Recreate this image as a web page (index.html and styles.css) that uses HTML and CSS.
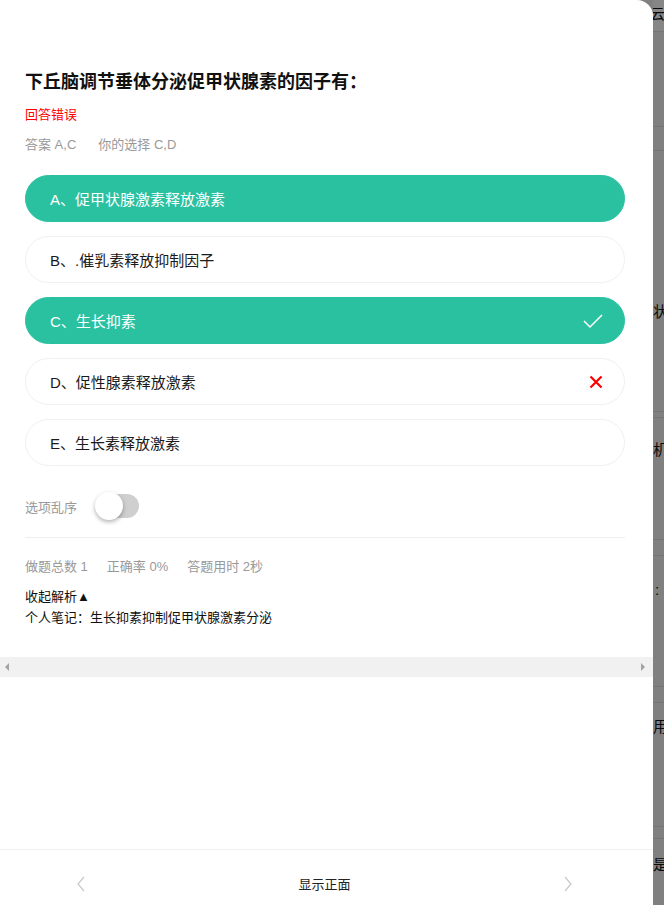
FILE: index.html
```html
<!DOCTYPE html>
<html lang="zh-CN">
<head>
  <meta charset="UTF-8">
  <meta name="viewport" content="width=device-width, initial-scale=1.0">
  <title>题目详情</title>
  <link rel="stylesheet" href="styles.css">
</head>
<body>
  <div class="screen">
    <div class="sheet">
      <div class="sheet-body">
        <h1 class="title">下丘脑调节垂体分泌促甲状腺素的因子有：</h1>
        <div class="verdict">回答错误</div>
        <div class="answer">
          <span>答案 A,C</span>
          <span>你的选择 C,D</span>
        </div>

        <div class="options">
          <div class="option selected">
            <span>A、促甲状腺激素释放激素</span>
          </div>
          <div class="option">
            <span>B、.催乳素释放抑制因子</span>
          </div>
          <div class="option selected">
            <span>C、生长抑素</span>
            <svg class="mark" width="20" height="16" viewBox="0 0 20 16">
              <polyline points="1,8 7,14 19,2" fill="none" stroke="#fff" stroke-width="1.5"/>
            </svg>
          </div>
          <div class="option">
            <span>D、促性腺素释放激素</span>
            <svg class="mark" width="14" height="14" viewBox="0 0 14 14">
              <path d="M1.5 1.5 L12.5 12.5 M12.5 1.5 L1.5 12.5" stroke="#f00" stroke-width="2.2" fill="none"/>
            </svg>
          </div>
          <div class="option">
            <span>E、生长素释放激素</span>
          </div>
        </div>

        <div class="shuffle">
          <span class="shuffle-label">选项乱序</span>
          <div class="switch"><div class="knob"></div></div>
        </div>

        <div class="divider"></div>

        <div class="stats">
          <span>做题总数 1</span>
          <span>正确率 0%</span>
          <span>答题用时 2秒</span>
        </div>
        <div class="toggle-analysis">收起解析▲</div>
        <div class="note">个人笔记：生长抑素抑制促甲状腺激素分泌</div>

        <div class="hscroll">
          <span class="arrow-left"></span>
          <span class="arrow-right"></span>
        </div>
      </div>

      <div class="footer">
        <svg width="10" height="16" viewBox="0 0 10 16">
          <polyline points="8,1 2,8 8,15" fill="none" stroke="#c8c8c8" stroke-width="1.2"/>
        </svg>
        <span class="flip">显示正面</span>
        <svg width="10" height="16" viewBox="0 0 10 16">
          <polyline points="2,1 8,8 2,15" fill="none" stroke="#c8c8c8" stroke-width="1.2"/>
        </svg>
      </div>
    </div>

    <!-- page behind the sheet, dimmed by the overlay -->
    <div class="backdrop">
      <div class="bd-row bd-head">云证</div>
      <div class="bd-row bd-filter"></div>
      <div class="bd-row bd-tabs"></div>
      <div class="bd-row bd-status">状态</div>
      <div class="bd-row bd-org">机构</div>
      <div class="bd-row bd-colon">:</div>
      <div class="bd-row bd-user">用户</div>
      <div class="bd-row bd-yes">是否</div>
    </div>
  </div>
</body>
</html>
```

FILE: styles.css
```css
body {
  margin: 0;
  overflow: hidden;
  font-family: "Liberation Sans", "Noto Sans CJK SC", sans-serif;
}
.screen {
  display: flex;
  height: 905px;
  background: #808080;
}
.sheet {
  width: 653px;
  flex-shrink: 0;
  background: #fff;
  border-top-right-radius: 16px;
  display: flex;
  flex-direction: column;
}
.sheet-body {
  flex: 1;
  padding: 70px 28px 0 25px;
}
.title {
  margin: 0;
  font-size: 18px;
  line-height: 24px;
  font-weight: bold;
  color: #111;
}
.verdict {
  margin-top: 11px;
  font-size: 13px;
  line-height: 20px;
  color: #f00;
}
.answer {
  margin-top: 10px;
  font-size: 13px;
  line-height: 20px;
  color: #999;
  display: flex;
  gap: 22px;
}
.options {
  margin-top: 20px;
  display: flex;
  flex-direction: column;
  gap: 14px;
}
.option {
  height: 47px;
  box-sizing: border-box;
  border: 1px solid #f0f0f0;
  border-radius: 24px;
  padding: 0 21px 0 24px;
  display: flex;
  align-items: center;
  justify-content: space-between;
  font-size: 15px;
  color: #1a1a1a;
}
.option.selected {
  background: #2ac1a1;
  border-color: #2ac1a1;
  color: #fff;
}
.mark {
  display: block;
}
.shuffle {
  margin-top: 27px;
  height: 26px;
  display: flex;
  align-items: center;
}
.shuffle-label {
  font-size: 13px;
  color: #999;
}
.switch {
  position: relative;
  margin-left: 19px;
  width: 43px;
  height: 24px;
  border-radius: 12px;
  background: #cfcfcf;
}
.knob {
  position: absolute;
  left: -1px;
  top: -2px;
  width: 28px;
  height: 28px;
  border-radius: 50%;
  background: #fff;
  box-shadow: 0 2px 4px rgba(0, 0, 0, 0.3);
}
.divider {
  margin-top: 18px;
  height: 1px;
  background: #eee;
}
.stats {
  margin-top: 19px;
  font-size: 13px;
  line-height: 20px;
  color: #999;
  display: flex;
  gap: 19px;
}
.toggle-analysis {
  margin-top: 9px;
  font-size: 13px;
  line-height: 21px;
  color: #111;
}
.note {
  font-size: 13px;
  line-height: 21px;
  color: #111;
}
.hscroll {
  margin: 29px -28px 0 -25px;
  height: 20px;
  background: #f1f1f1;
  display: flex;
  align-items: center;
  justify-content: space-between;
  padding: 0 8px 0 5px;
}
.arrow-left {
  width: 0;
  height: 0;
  border-top: 4px solid transparent;
  border-bottom: 4px solid transparent;
  border-right: 4px solid #a3a3a3;
}
.arrow-right {
  width: 0;
  height: 0;
  border-top: 4px solid transparent;
  border-bottom: 4px solid transparent;
  border-left: 4px solid #a3a3a3;
}
.footer {
  height: 56px;
  box-sizing: border-box;
  border-top: 1px solid #f0f0f0;
  padding: 12px 80px 0 76px;
  display: flex;
  align-items: center;
  justify-content: space-between;
}
.flip {
  font-size: 13px;
  color: #222;
}

/* backdrop */
.backdrop {
  flex: 1;
  overflow: hidden;
  white-space: nowrap;
  font-size: 15px;
  line-height: 20px;
  color: #0a0a0a;
}
.bd-row {
  box-sizing: border-box;
  border-bottom: 1px solid #757575;
}
.bd-head {
  height: 32px;
  padding-top: 4px;
  background: #868686;
  text-indent: -3px;
}
.bd-filter {
  height: 95px;
}
.bd-tabs {
  height: 24px;
}
.bd-status {
  height: 261px;
  padding-top: 151px;
}
.bd-org {
  margin-top: 5px;
  border-top: 1px solid #757575;
  height: 123px;
  padding-top: 22px;
}
.bd-colon {
  margin-top: 15px;
  border-top: 1px solid #757575;
  height: 132px;
  padding-top: 24px;
  padding-left: 2px;
}
.bd-user {
  margin-top: 15px;
  border-top: 1px solid #757575;
  height: 125px;
  padding-top: 14px;
}
.bd-yes {
  margin-top: 11px;
  border-top: 1px solid #757575;
  height: 67px;
  padding-top: 16px;
  border-bottom: none;
}
```
